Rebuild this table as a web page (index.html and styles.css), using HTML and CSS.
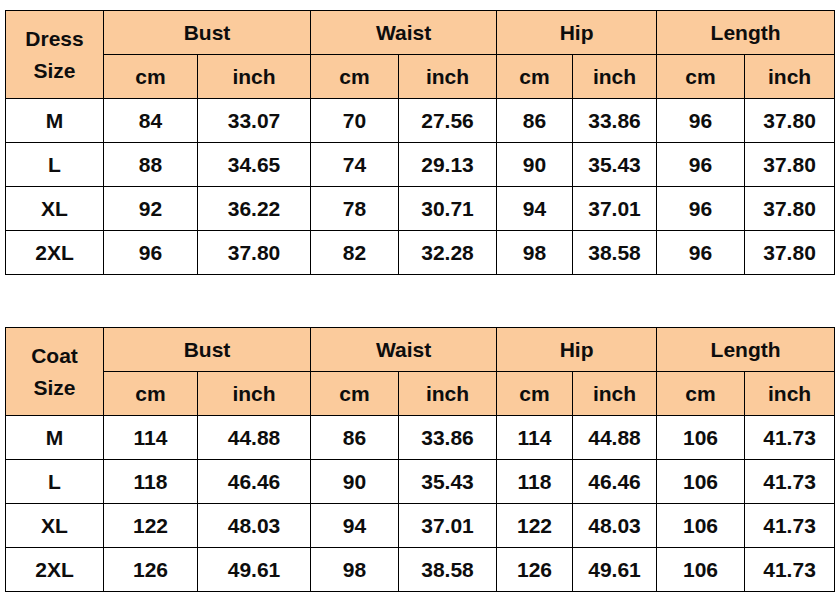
FILE: index.html
```html
<!DOCTYPE html>
<html>
<head>
<meta charset="utf-8">
<link rel="stylesheet" href="styles.css">
</head>
<body>
<div class="page">
  <table class="size-table">
    <colgroup>
      <col class="c-size"><col class="c-bcm"><col class="c-bin"><col class="c-wcm"><col class="c-win"><col class="c-hcm"><col class="c-hin"><col class="c-lcm"><col class="c-lin">
    </colgroup>
    <thead>
      <tr class="hrow">
        <th rowspan="2" class="size-head">Dress<br>Size</th>
        <th colspan="2">Bust</th>
        <th colspan="2">Waist</th>
        <th colspan="2">Hip</th>
        <th colspan="2">Length</th>
      </tr>
      <tr class="hrow">
        <th>cm</th><th>inch</th><th>cm</th><th>inch</th><th>cm</th><th>inch</th><th>cm</th><th>inch</th>
      </tr>
    </thead>
    <tbody>
      <tr><td>M</td><td>84</td><td>33.07</td><td>70</td><td>27.56</td><td>86</td><td>33.86</td><td>96</td><td>37.80</td></tr>
      <tr><td>L</td><td>88</td><td>34.65</td><td>74</td><td>29.13</td><td>90</td><td>35.43</td><td>96</td><td>37.80</td></tr>
      <tr><td>XL</td><td>92</td><td>36.22</td><td>78</td><td>30.71</td><td>94</td><td>37.01</td><td>96</td><td>37.80</td></tr>
      <tr><td>2XL</td><td>96</td><td>37.80</td><td>82</td><td>32.28</td><td>98</td><td>38.58</td><td>96</td><td>37.80</td></tr>
    </tbody>
  </table>

  <table class="size-table">
    <colgroup>
      <col class="c-size"><col class="c-bcm"><col class="c-bin"><col class="c-wcm"><col class="c-win"><col class="c-hcm"><col class="c-hin"><col class="c-lcm"><col class="c-lin">
    </colgroup>
    <thead>
      <tr class="hrow">
        <th rowspan="2" class="size-head">Coat<br>Size</th>
        <th colspan="2">Bust</th>
        <th colspan="2">Waist</th>
        <th colspan="2">Hip</th>
        <th colspan="2">Length</th>
      </tr>
      <tr class="hrow">
        <th>cm</th><th>inch</th><th>cm</th><th>inch</th><th>cm</th><th>inch</th><th>cm</th><th>inch</th>
      </tr>
    </thead>
    <tbody>
      <tr><td>M</td><td>114</td><td>44.88</td><td>86</td><td>33.86</td><td>114</td><td>44.88</td><td>106</td><td>41.73</td></tr>
      <tr><td>L</td><td>118</td><td>46.46</td><td>90</td><td>35.43</td><td>118</td><td>46.46</td><td>106</td><td>41.73</td></tr>
      <tr><td>XL</td><td>122</td><td>48.03</td><td>94</td><td>37.01</td><td>122</td><td>48.03</td><td>106</td><td>41.73</td></tr>
      <tr><td>2XL</td><td>126</td><td>49.61</td><td>98</td><td>38.58</td><td>126</td><td>49.61</td><td>106</td><td>41.73</td></tr>
    </tbody>
  </table>
</div>
</body>
</html>
```

FILE: styles.css
```css
html, body {
  margin: 0;
  padding: 0;
  background: #ffffff;
}

.page {
  padding: 10px 0 0 5px;
  display: flex;
  flex-direction: column;
  gap: 52px;
  font-family: "Liberation Sans", Arial, sans-serif;
}

.size-table {
  border-collapse: collapse;
  table-layout: fixed;
  width: 830px;
  font-weight: bold;
  font-size: 21px;
  color: #0d0d0d;
}

.c-size { width: 98px; }
.c-bcm { width: 94px; }
.c-bin { width: 113px; }
.c-wcm { width: 88px; }
.c-win { width: 98px; }
.c-hcm { width: 76px; }
.c-hin { width: 84px; }
.c-lcm { width: 88px; }
.c-lin { width: 90px; }

.size-table th,
.size-table td {
  border: 1.5px solid #000000;
  text-align: center;
  vertical-align: middle;
  padding: 0;
  height: 44px;
  box-sizing: border-box;
}

.size-table th {
  background: #fbcb9c;
  font-weight: bold;
}

.size-head {
  line-height: 32px;
  padding-top: 2px;
}
```
